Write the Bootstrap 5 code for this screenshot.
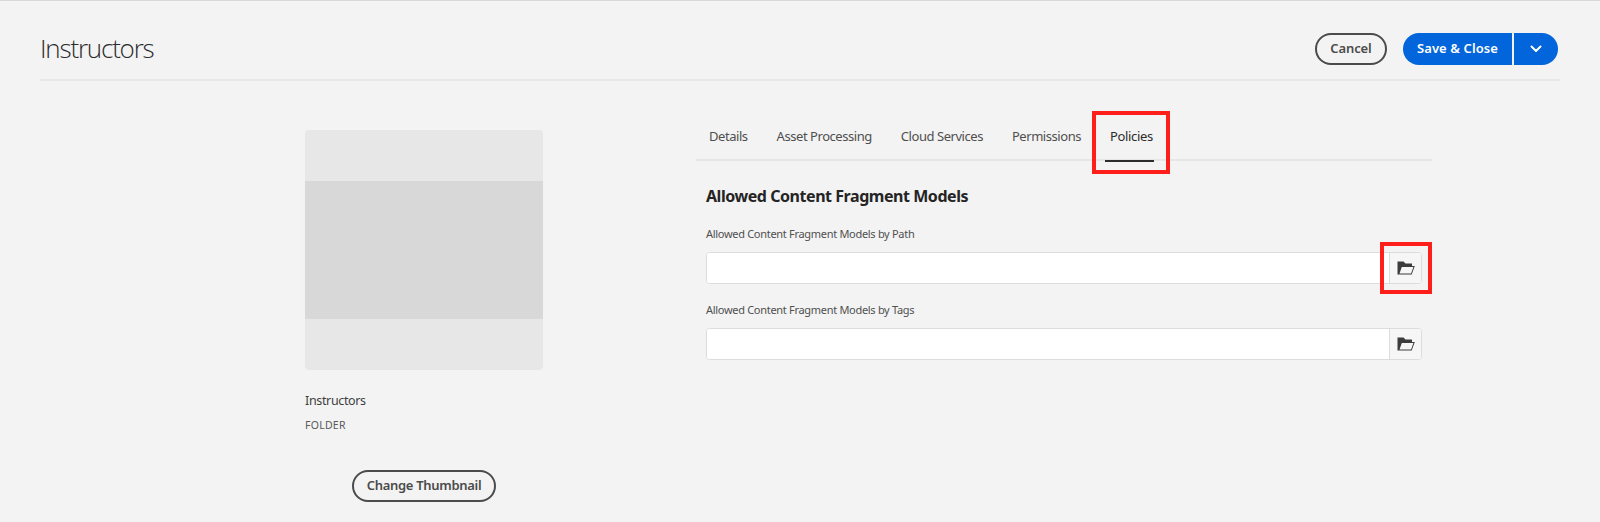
<!DOCTYPE html>
<html lang="en"><head><meta charset="utf-8"><title>Instructors</title>
<link href="https://cdn.jsdelivr.net/npm/bootstrap@5.3.0/dist/css/bootstrap.min.css" rel="stylesheet">
<style>
html,body{height:522px;overflow:hidden}
body{background:#f3f3f3;font-family:"Noto Sans","Open Sans",sans-serif;color:#4b4b4b;border-top:1px solid #d8d8d8;position:relative}
.page-head{margin:0 40px;height:80px;border-bottom:2px solid #e8e8e8;padding:18px 2px 0 0}
.page-title{font-family:"Open Sans",sans-serif;font-weight:300;font-size:26px;color:#2c2c2c;margin:0;letter-spacing:-1.2px}
.pill{height:32px;border-radius:16px;font-size:13px;font-weight:600;padding:0;display:inline-flex;align-items:center;justify-content:center;letter-spacing:-.1px}
.pill-out{border:2px solid #4b4b4b;color:#4b4b4b;background:transparent}
.pill-cancel{width:72px;margin-right:16px}
.pill-save{width:109px;background:#0265dc;color:#fff;border:0;border-radius:16px 0 0 16px;letter-spacing:.1px}
.pill-more{width:44px;margin-left:2px;background:#0265dc;border:0;border-radius:0 16px 16px 0}
.body-wrap{padding:49px 0 0 305px}
.thumb-col{width:238px;margin-right:153px}
.thumb-box{height:240px;background:#e7e7e7;border-radius:4px;display:flex;align-items:center}
.thumb-inner{height:138px;width:100%;background:#d8d8d8}
.thumb-name{font-size:12.5px;color:#3f3f3f;margin-top:22px;line-height:18px;letter-spacing:-.35px}
.thumb-type{font-size:10.5px;color:#5a5a5a;margin-top:8px;line-height:14px;letter-spacing:.25px}
.pill-thumb{width:144px;height:32px;margin:38px 0 0 47px;letter-spacing:-.3px}
.form-col{width:736px}
.tab-row{height:31px;border-bottom:2px solid #e6e6e6;padding-left:13px;gap:29px}
.tab-item{font-size:13px;color:#4f4f4f;line-height:18px;letter-spacing:-.45px;position:relative;height:34px;margin-top:-3px}
.tab-on{color:#2c2c2c;letter-spacing:-.35px}
.tab-on::after{content:"";position:absolute;left:-5px;right:-1px;bottom:-1px;height:2px;background:#2c2c2c}
.form-body{padding-left:10px;width:726px}
.sect-title{font-size:16px;font-weight:700;color:#242424;margin:24px 0 0;line-height:22px;letter-spacing:-.45px}
.fld-label{font-size:11px;color:#505050;line-height:16px;margin:0;letter-spacing:-.3px}
.fld-one{margin-top:19px}
.fld-two{margin-top:18px}
.fld-group{height:32px;margin-top:10px;border:1px solid #dcdcdc;border-radius:4px;background:#fff;overflow:hidden}
.fld-input{border:0;height:100%;background:#fff;outline:0;min-width:0}
.fld-btn{width:32px;background:#f6f6f6;border-left:1px solid #dcdcdc;display:flex;align-items:center;justify-content:center}
.fld-btn svg{width:18px;height:14px}
.mark-box{position:absolute;border:4px solid #ff1f1a}
.mark-tab{left:1092px;top:110px;width:78px;height:63px}
.mark-btn{left:1380px;top:241px;width:52px;height:52px}
</style></head>
<body>
<header class="page-head d-flex justify-content-between align-items-center">
<h1 class="page-title">Instructors</h1>
<div class="d-flex align-items-center">
<button class="btn pill pill-out pill-cancel">Cancel</button>
<button class="btn pill pill-save">Save &amp; Close</button>
<button class="btn pill pill-more" aria-label="More"><svg width="12" height="8" viewBox="0 0 12 8"><path d="M1.500 1.500 6 6l4.500-4.500" fill="none" stroke="#fff" stroke-width="2" stroke-linecap="round" stroke-linejoin="round"/></svg></button>
</div>
</header>
<main class="body-wrap d-flex align-items-start">
<section class="thumb-col">
<div class="thumb-box"><div class="thumb-inner"></div></div>
<div class="thumb-name">Instructors</div>
<div class="thumb-type">FOLDER</div>
<button class="btn pill pill-out pill-thumb">Change Thumbnail</button>
</section>
<section class="form-col">
<nav class="tab-row d-flex">
<span class="tab-item">Details</span><span class="tab-item">Asset Processing</span><span class="tab-item">Cloud Services</span><span class="tab-item">Permissions</span><span class="tab-item tab-on">Policies</span>
</nav>
<div class="form-body">
<h2 class="sect-title">Allowed Content Fragment Models</h2>
<p class="fld-label fld-one">Allowed Content Fragment Models by Path</p>
<div class="fld-group d-flex"><input class="fld-input flex-grow-1" aria-label="Path"><span class="fld-btn"><svg viewBox="0 0 18 14"><path d="M.5 13.500V.5h6l2 2h6.500V5h2.800l-3.100 8.500z" fill="#3c3c3c"/><path d="M4.800 6h11.600l-2.300 6.500H2.500z" fill="#f6f6f6"/></svg></span></div>
<p class="fld-label fld-two">Allowed Content Fragment Models by Tags</p>
<div class="fld-group d-flex"><input class="fld-input flex-grow-1" aria-label="Tags"><span class="fld-btn"><svg viewBox="0 0 18 14"><path d="M.5 13.500V.5h6l2 2h6.500V5h2.800l-3.100 8.500z" fill="#3c3c3c"/><path d="M4.800 6h11.600l-2.300 6.500H2.500z" fill="#f6f6f6"/></svg></span></div>
</div>
</section>
</main>
<div class="mark-box mark-tab"></div>
<div class="mark-box mark-btn"></div>
</body></html>
